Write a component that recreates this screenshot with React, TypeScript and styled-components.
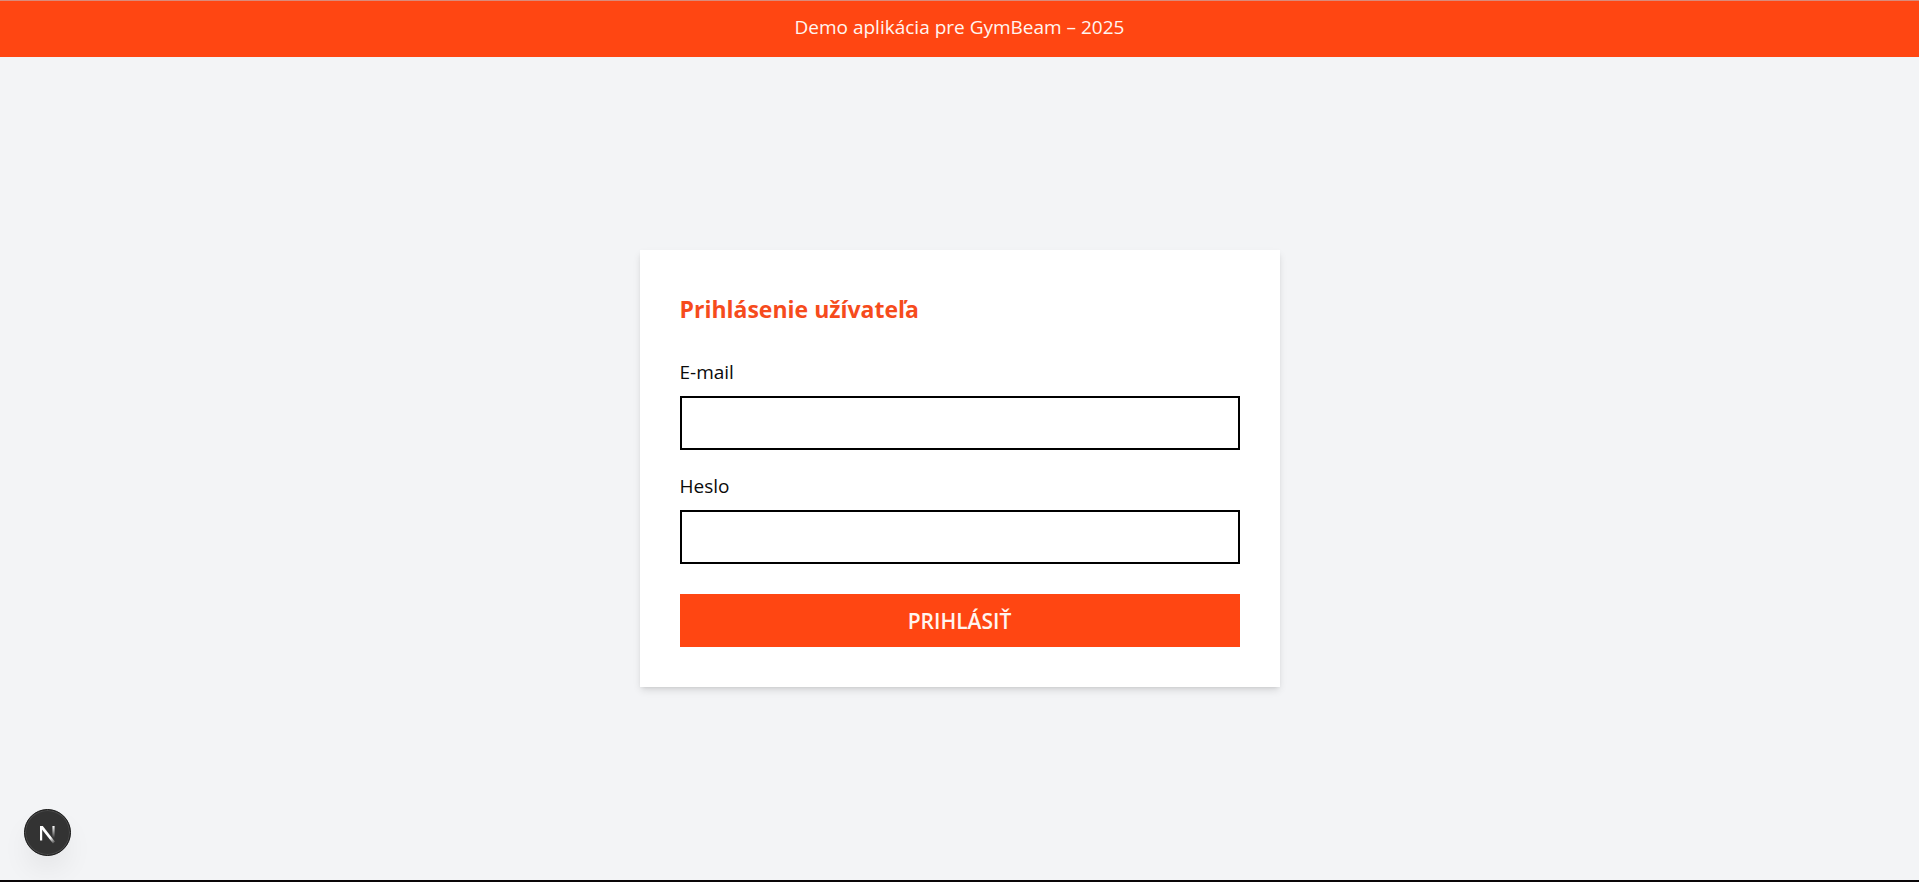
import React, { useId } from "react";
import styled, { createGlobalStyle } from "styled-components";

const GlobalStyle = createGlobalStyle`
  *, *::before, *::after { box-sizing: border-box; }
  body { margin: 0; background: #f3f4f6; }
`;

const Page = styled.div`
  min-height: 100vh;
  display: flex;
  flex-direction: column;
  color: #0a0a0a;
  border-top: 1px solid #d98b7b;
  border-bottom: 2px solid #0a0708;
  background: #f3f4f6;
  font-family: "Open Sans", "Noto Sans", sans-serif;
  font-size: 19px;
  line-height: 28px;
`;

const TopBar = styled.header`
  padding: 12px 16px 16px;
  background: #ff4612;
  color: #fff5f0;
  text-align: center;
`;

const Main = styled.main`
  flex: 1;
  display: flex;
  align-items: center;
  justify-content: center;
`;

const Card = styled.form`
  width: 100%;
  max-width: 640px;
  padding: 40px;
  background: #ffffff;
  box-shadow: 0 4px 8px -1px rgba(0, 0, 0, 0.12), 0 2px 4px -2px rgba(0, 0, 0, 0.12);
`;

const Title = styled.h1`
  margin: 0 0 30px;
  color: #f64b1c;
  font-size: 23px;
  font-weight: 700;
  line-height: 38px;
`;

const FieldGroup = styled.div`
  display: flex;
  flex-direction: column;
  gap: 10px;
  margin-bottom: 22px;
`;

const Input = styled.input`
  width: 100%;
  height: 54px;
  padding: 8px 12px;
  border: 2px solid #000000;
  border-radius: 0;
  background: #ffffff;
  color: inherit;
  font: inherit;
`;

const SubmitButton = styled.button`
  display: block;
  width: 100%;
  height: 53px;
  margin-top: 30px;
  padding: 0 12px;
  border: 0;
  background: #ff4612;
  color: #fff5f0;
  font: inherit;
  font-size: 21px;
  font-weight: 600;
  text-transform: uppercase;
  cursor: pointer;
`;

const DevBadge = styled.button`
  position: fixed;
  left: 24px;
  bottom: 26px;
  width: 47px;
  height: 47px;
  padding: 0;
  border: 1px solid #151515;
  border-radius: 50%;
  background: #333333;
  box-shadow: inset 0 0 0 1px #4a4a4a, 0 16px 32px -8px rgba(0, 0, 0, 0.12);
  cursor: pointer;

  svg { display: block; }
`;

function Field({ label, type }: { label: string; type: string }) {
  const id = useId();
  return (
    <FieldGroup>
      <label htmlFor={id}>{label}</label>
      <Input id={id} type={type} />
    </FieldGroup>
  );
}

function NextMark() {
  return (
    <svg width="45" height="45" viewBox="0 0 45 45" fill="none" aria-hidden="true">
      <defs>
        <linearGradient id="diagonal" x1="23" y1="24" x2="29.5" y2="33" gradientUnits="userSpaceOnUse">
          <stop stopColor="#fff" />
          <stop offset="0.4" stopColor="#fff" />
          <stop offset="1" stopColor="#fff" stopOpacity="0.1" />
        </linearGradient>
        <linearGradient id="stem" x1="28" y1="16" x2="28" y2="28" gradientUnits="userSpaceOnUse">
          <stop stopColor="#fff" />
          <stop offset="1" stopColor="#fff" stopOpacity="0" />
        </linearGradient>
      </defs>
      <path d="M15 16H17.2V30.5H15Z" fill="#fff" />
      <path d="M15 16H17.8L30 31.8L28 33.4L15 17Z" fill="url(#diagonal)" />
      <path d="M27.4 16H29.6V28H27.4Z" fill="url(#stem)" />
    </svg>
  );
}

export default function App() {
  return (
    <>
      <GlobalStyle />
      <Page>
        <TopBar>Demo aplikácia pre GymBeam – 2025</TopBar>
        <Main>
          <Card onSubmit={(event) => event.preventDefault()}>
            <Title>Prihlásenie užívateľa</Title>
            <Field label="E-mail" type="email" />
            <Field label="Heslo" type="password" />
            <SubmitButton type="submit">Prihlásiť</SubmitButton>
          </Card>
        </Main>
        <DevBadge type="button" aria-label="Next.js">
          <NextMark />
        </DevBadge>
      </Page>
    </>
  );
}
